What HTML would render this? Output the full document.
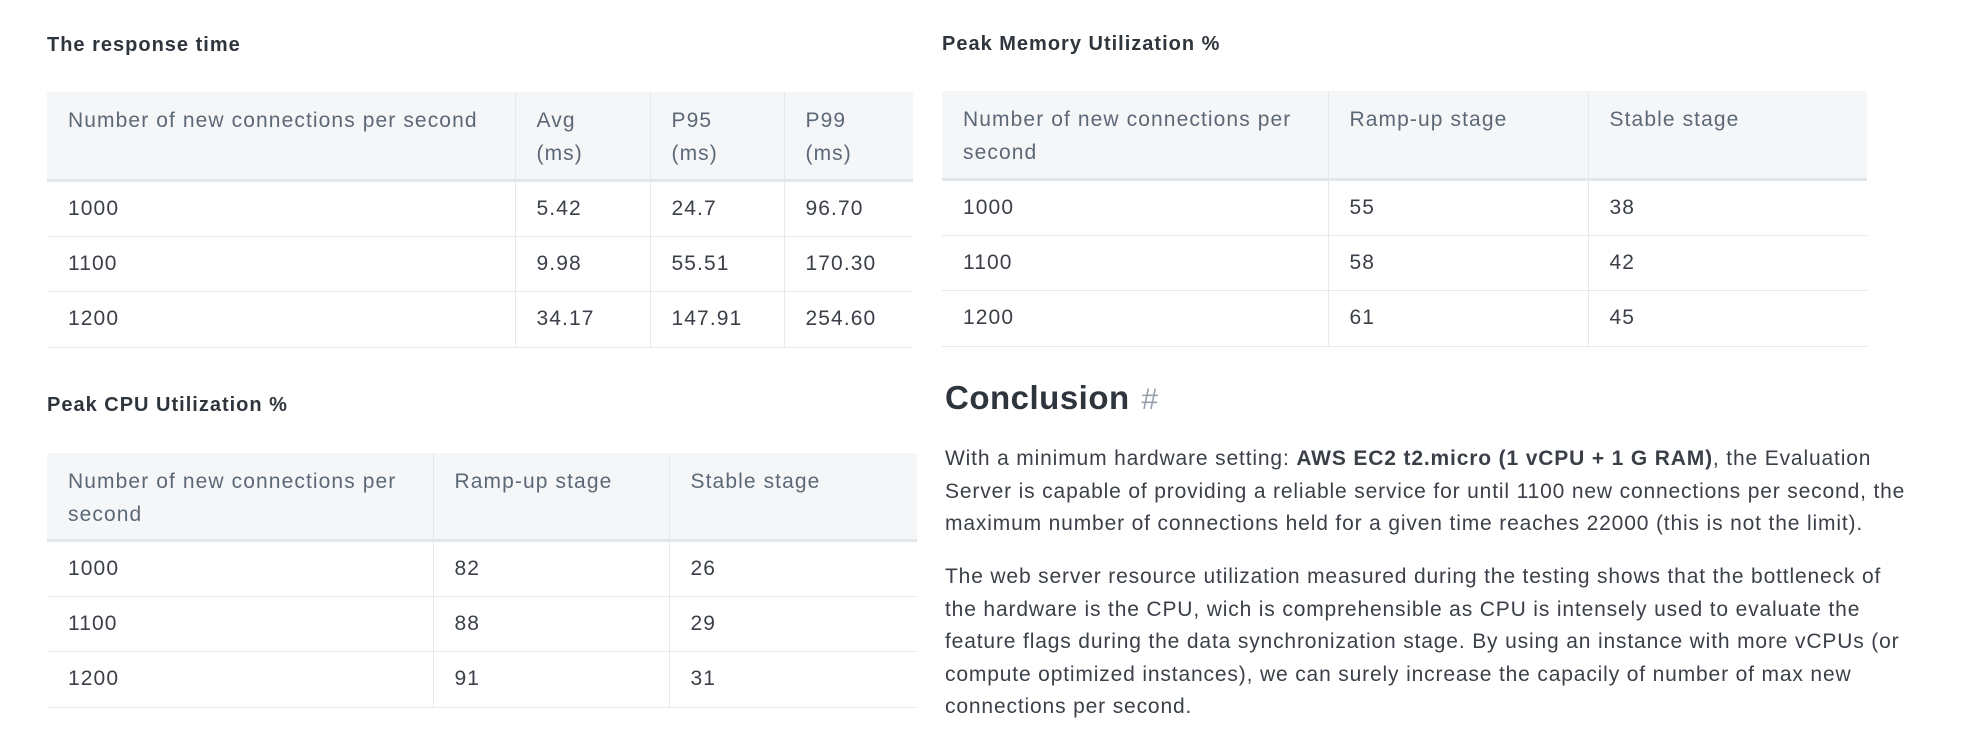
<!DOCTYPE html>
<html><head><meta charset="utf-8"><style>
*{margin:0;padding:0;box-sizing:border-box}
body{width:1978px;height:748px;background:#fff;font-family:"Liberation Sans",sans-serif;color:#3b4048;position:relative;overflow:hidden}
.t{position:absolute;font-size:20px;font-weight:bold;color:#2f353d;letter-spacing:1px}
table{position:absolute;border-collapse:collapse;font-size:21px;letter-spacing:1.1px;table-layout:fixed}
th{background:#f4f6f8;color:#5d6877;font-weight:normal;text-align:left;vertical-align:top;padding:12px 21px 0;line-height:33px;border-bottom:3px solid #e2e5e9;border-left:1px solid #e6e9ec;white-space:nowrap}
td{color:#3b4048;padding:0 21px;border-bottom:1px solid #e6e8eb;border-left:1px solid #e6e8eb;vertical-align:middle}
th:first-child,td:first-child{border-left:none}
p{position:absolute;left:945px;font-size:21px;letter-spacing:0.85px;line-height:32.5px;color:#3b4048;white-space:nowrap}
</style></head><body>
<div class="t" style="left:47px;top:34px">The response time</div>
<table style="left:47px;top:92px;width:866px">
<colgroup><col style="width:468px"><col style="width:135px"><col style="width:134px"><col style="width:129px"></colgroup>
<tr style="height:88px"><th>Number of new connections per second</th><th>Avg<br>(ms)</th><th>P95<br>(ms)</th><th>P99<br>(ms)</th></tr>
<tr style="height:56px"><td>1000</td><td>5.42</td><td>24.7</td><td>96.70</td></tr>
<tr style="height:55px"><td>1100</td><td>9.98</td><td>55.51</td><td>170.30</td></tr>
<tr style="height:56px"><td>1200</td><td>34.17</td><td>147.91</td><td>254.60</td></tr>
</table>
<div class="t" style="left:942px;top:33px">Peak Memory Utilization %</div>
<table style="left:942px;top:91px;width:925px">
<colgroup><col style="width:386px"><col style="width:260px"><col style="width:279px"></colgroup>
<tr style="height:88px"><th>Number of new connections per<br>second</th><th>Ramp-up stage</th><th>Stable stage</th></tr>
<tr style="height:56px"><td>1000</td><td>55</td><td>38</td></tr>
<tr style="height:55px"><td>1100</td><td>58</td><td>42</td></tr>
<tr style="height:56px"><td>1200</td><td>61</td><td>45</td></tr>
</table>
<div class="t" style="left:47px;top:394px">Peak CPU Utilization %</div>
<table style="left:47px;top:453px;width:870px">
<colgroup><col style="width:386px"><col style="width:236px"><col style="width:248px"></colgroup>
<tr style="height:87px"><th>Number of new connections per<br>second</th><th>Ramp-up stage</th><th>Stable stage</th></tr>
<tr style="height:56px"><td>1000</td><td>82</td><td>26</td></tr>
<tr style="height:55px"><td>1100</td><td>88</td><td>29</td></tr>
<tr style="height:56px"><td>1200</td><td>91</td><td>31</td></tr>
</table>
<div style="position:absolute;left:945px;top:379px;font-size:33px;font-weight:bold;color:#2f353d;letter-spacing:0.5px">Conclusion <span style="font-weight:normal;color:#9aa3ad;font-size:30px;margin-left:2px">#</span></div>
<p style="top:443px">With a minimum hardware setting: <b>AWS EC2 t2.micro (1 vCPU + 1 G RAM)</b>, the Evaluation<br>Server is capable of providing a reliable service for until 1100 new connections per second, the<br>maximum number of connections held for a given time reaches 22000 (this is not the limit).</p>
<p style="top:561px">The web server resource utilization measured during the testing shows that the bottleneck of<br>the hardware is the CPU, wich is comprehensible as CPU is intensely used to evaluate the<br>feature flags during the data synchronization stage. By using an instance with more vCPUs (or<br>compute optimized instances), we can surely increase the capacily of number of max new<br>connections per second.</p>
</body></html>
